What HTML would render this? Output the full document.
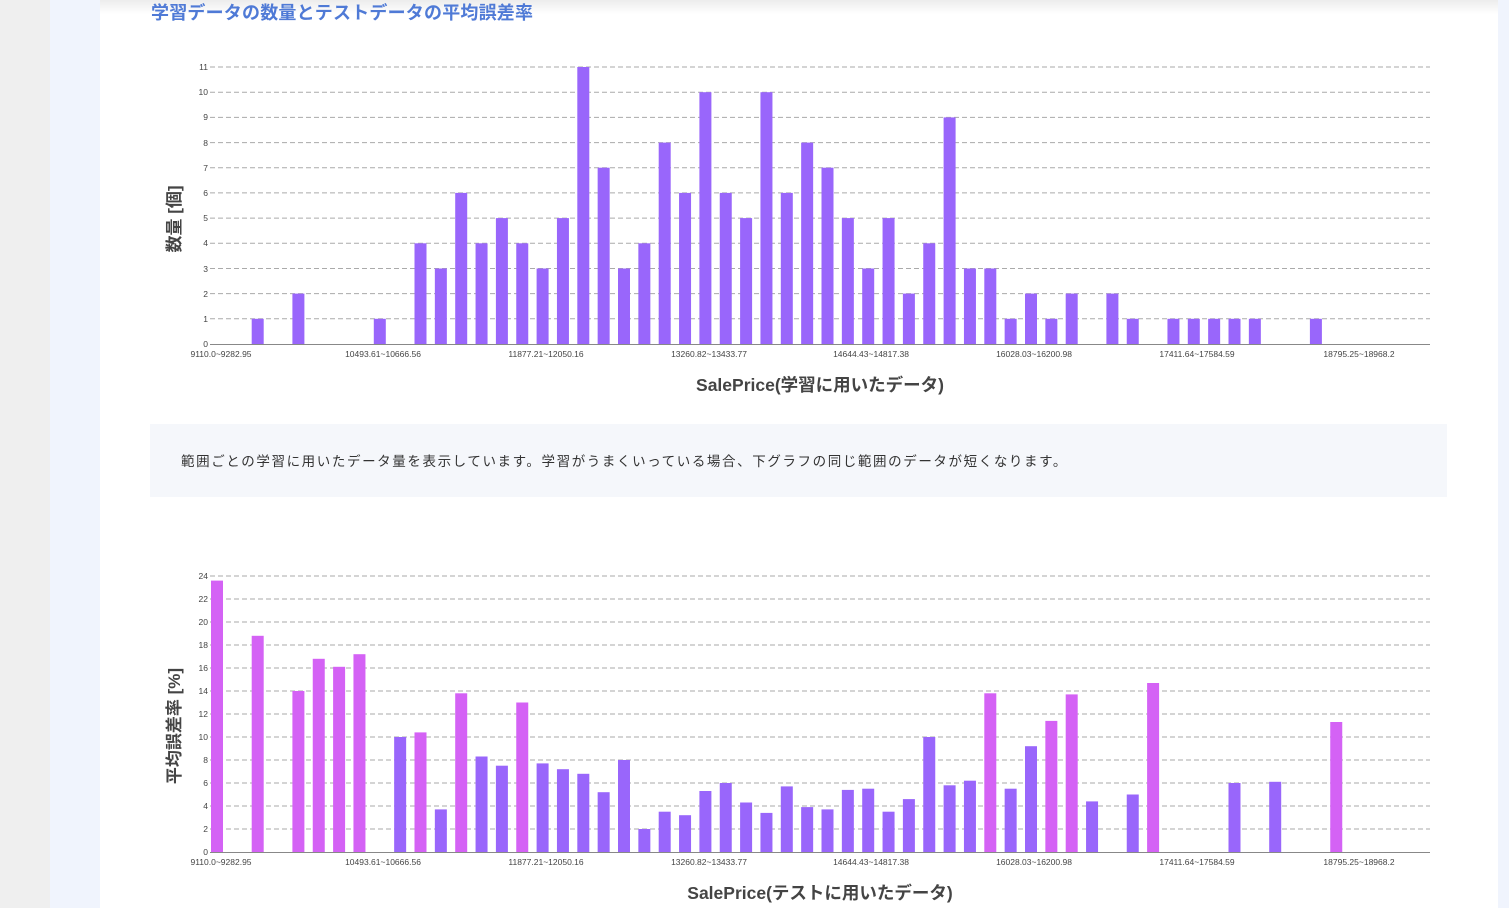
<!DOCTYPE html>
<html><head><meta charset="utf-8"><style>
body{margin:0;width:1509px;height:908px;overflow:hidden;background:#fff;font-family:"Liberation Sans","Noto Sans CJK JP",sans-serif;position:relative}
.l1{position:absolute;left:0;top:0;width:50px;height:908px;background:#efefef}
.l2{position:absolute;left:50px;top:0;width:50px;height:908px;background:#f0f4fd}
.r1{position:absolute;left:1498px;top:0;width:11px;height:908px;background:#f0f4fd}
.top{position:absolute;left:100px;top:0;width:1398px;height:14px;background:linear-gradient(#ececec,#fff)}
h1{position:absolute;left:151px;top:-1px;margin:0;font-size:18px;color:#4f7ad6;font-weight:bold;white-space:nowrap;letter-spacing:0.2px}
.info{position:absolute;left:150px;top:424px;width:1297px;height:73px;background:#f5f7fb}
.info p{margin:0;position:absolute;left:31px;top:26px;font-size:13.5px;color:#333;white-space:nowrap;letter-spacing:1.6px}
svg{position:absolute;left:0;top:0}
</style></head><body>
<div class="l1"></div><div class="l2"></div><div class="r1"></div><div class="top"></div>
<h1>学習データの数量とテストデータの平均誤差率</h1>
<div class="info"><p>範囲ごとの学習に用いたデータ量を表示しています。学習がうまくいっている場合、下グラフの同じ範囲のデータが短くなります。</p></div>
<svg width="1509" height="908" font-family="Liberation Sans, Noto Sans CJK JP, sans-serif">
<g stroke="#aaa" stroke-dasharray="5,3" stroke-width="1">
<line x1="210" x2="1430" y1="318.8" y2="318.8"/><line x1="210" x2="1430" y1="293.6" y2="293.6"/><line x1="210" x2="1430" y1="268.5" y2="268.5"/><line x1="210" x2="1430" y1="243.3" y2="243.3"/><line x1="210" x2="1430" y1="218.1" y2="218.1"/><line x1="210" x2="1430" y1="192.9" y2="192.9"/><line x1="210" x2="1430" y1="167.7" y2="167.7"/><line x1="210" x2="1430" y1="142.6" y2="142.6"/><line x1="210" x2="1430" y1="117.4" y2="117.4"/><line x1="210" x2="1430" y1="92.2" y2="92.2"/><line x1="210" x2="1430" y1="67" y2="67"/>
<line x1="210" x2="1430" y1="829" y2="829"/><line x1="210" x2="1430" y1="806" y2="806"/><line x1="210" x2="1430" y1="783" y2="783"/><line x1="210" x2="1430" y1="760" y2="760"/><line x1="210" x2="1430" y1="737" y2="737"/><line x1="210" x2="1430" y1="714" y2="714"/><line x1="210" x2="1430" y1="691" y2="691"/><line x1="210" x2="1430" y1="668" y2="668"/><line x1="210" x2="1430" y1="645" y2="645"/><line x1="210" x2="1430" y1="622" y2="622"/><line x1="210" x2="1430" y1="599" y2="599"/><line x1="210" x2="1430" y1="576" y2="576"/>
</g>
<line x1="210" x2="1430" y1="344.5" y2="344.5" stroke="#888"/>
<line x1="210" x2="1430" y1="852.5" y2="852.5" stroke="#888"/>
<g font-size="8.5" fill="#444" text-anchor="end">
<text x="208" y="347">0</text><text x="208" y="322">1</text><text x="208" y="297">2</text><text x="208" y="272">3</text><text x="208" y="246">4</text><text x="208" y="221">5</text><text x="208" y="196">6</text><text x="208" y="171">7</text><text x="208" y="146">8</text><text x="208" y="120">9</text><text x="208" y="95">10</text><text x="208" y="70">11</text>
<text x="208" y="855">0</text><text x="208" y="832">2</text><text x="208" y="809">4</text><text x="208" y="786">6</text><text x="208" y="763">8</text><text x="208" y="740">10</text><text x="208" y="717">12</text><text x="208" y="694">14</text><text x="208" y="671">16</text><text x="208" y="648">18</text><text x="208" y="625">20</text><text x="208" y="602">22</text><text x="208" y="579">24</text>
</g>
<g font-size="8.5" fill="#444" text-anchor="middle">
<text x="221" y="357">9110.0~9282.95</text><text x="383" y="357">10493.61~10666.56</text><text x="546" y="357">11877.21~12050.16</text><text x="709" y="357">13260.82~13433.77</text><text x="871" y="357">14644.43~14817.38</text><text x="1034" y="357">16028.03~16200.98</text><text x="1197" y="357">17411.64~17584.59</text><text x="1359" y="357">18795.25~18968.2</text>
<text x="221" y="865">9110.0~9282.95</text><text x="383" y="865">10493.61~10666.56</text><text x="546" y="865">11877.21~12050.16</text><text x="709" y="865">13260.82~13433.77</text><text x="871" y="865">14644.43~14817.38</text><text x="1034" y="865">16028.03~16200.98</text><text x="1197" y="865">17411.64~17584.59</text><text x="1359" y="865">18795.25~18968.2</text>
</g>
<g font-size="17.5" fill="#444" text-anchor="middle" font-weight="bold">
<text x="820" y="391">SalePrice(学習に用いたデータ)</text>
<text x="820" y="899">SalePrice(テストに用いたデータ)</text>
</g>
<g font-size="17" fill="#444" text-anchor="middle" font-weight="bold">
<text transform="translate(180,219) rotate(-90)">数量 [個]</text>
<text transform="translate(180,726) rotate(-90)">平均誤差率 [%]</text>
</g>
<g fill="#9966fb" transform="translate(211,344) scale(1,-1)">
<rect x="40.7" width="12" height="25.2"/><rect x="81.4" width="12" height="50.4"/><rect x="162.8" width="12" height="25.2"/>
<rect x="203.5" width="12" height="100.7"/><rect x="223.85" width="12" height="75.5"/><rect x="244.2" width="12" height="151.1"/><rect x="264.55" width="12" height="100.7"/><rect x="284.9" width="12" height="125.9"/><rect x="305.25" width="12" height="100.7"/><rect x="325.6" width="12" height="75.5"/><rect x="345.95" width="12" height="125.9"/><rect x="366.3" width="12" height="277"/><rect x="386.65" width="12" height="176.3"/><rect x="407" width="12" height="75.5"/><rect x="427.35" width="12" height="100.7"/><rect x="447.7" width="12" height="201.4"/><rect x="468.05" width="12" height="151.1"/><rect x="488.4" width="12" height="251.8"/><rect x="508.75" width="12" height="151.1"/><rect x="529.1" width="12" height="125.9"/><rect x="549.45" width="12" height="251.8"/><rect x="569.8" width="12" height="151.1"/><rect x="590.15" width="12" height="201.4"/><rect x="610.5" width="12" height="176.3"/><rect x="630.85" width="12" height="125.9"/><rect x="651.2" width="12" height="75.5"/><rect x="671.55" width="12" height="125.9"/><rect x="691.9" width="12" height="50.4"/><rect x="712.25" width="12" height="100.7"/><rect x="732.6" width="12" height="226.6"/><rect x="752.95" width="12" height="75.5"/><rect x="773.3" width="12" height="75.5"/><rect x="793.65" width="12" height="25.2"/><rect x="814" width="12" height="50.4"/><rect x="834.35" width="12" height="25.2"/><rect x="854.7" width="12" height="50.4"/><rect x="895.4" width="12" height="50.4"/><rect x="915.75" width="12" height="25.2"/><rect x="956.45" width="12" height="25.2"/><rect x="976.8" width="12" height="25.2"/><rect x="997.15" width="12" height="25.2"/><rect x="1017.5" width="12" height="25.2"/><rect x="1037.85" width="12" height="25.2"/><rect x="1098.9" width="12" height="25.2"/>
</g>
<g transform="translate(211,852) scale(1,-1)">
<g fill="#d462f5">
<rect x="0" width="12" height="271.4"/><rect x="40.7" width="12" height="216.2"/><rect x="81.4" width="12" height="161"/><rect x="101.75" width="12" height="193.2"/><rect x="122.1" width="12" height="185.2"/><rect x="142.45" width="12" height="197.8"/><rect x="203.5" width="12" height="119.6"/><rect x="244.2" width="12" height="158.7"/><rect x="305.25" width="12" height="149.5"/><rect x="773.3" width="12" height="158.7"/><rect x="834.35" width="12" height="131.1"/><rect x="854.7" width="12" height="157.6"/><rect x="936.1" width="12" height="169"/><rect x="1119.25" width="12" height="130"/>
</g>
<g fill="#9966fb">
<rect x="183.15" width="12" height="115"/><rect x="223.85" width="12" height="42.6"/><rect x="264.55" width="12" height="95.5"/><rect x="284.9" width="12" height="86.3"/><rect x="325.6" width="12" height="88.6"/><rect x="345.95" width="12" height="82.8"/><rect x="366.3" width="12" height="78.2"/><rect x="386.65" width="12" height="59.8"/><rect x="407" width="12" height="92"/><rect x="427.35" width="12" height="23"/><rect x="447.7" width="12" height="40.3"/><rect x="468.05" width="12" height="36.8"/><rect x="488.4" width="12" height="61"/><rect x="508.75" width="12" height="69"/><rect x="529.1" width="12" height="49.5"/><rect x="549.45" width="12" height="39.1"/><rect x="569.8" width="12" height="65.6"/><rect x="590.15" width="12" height="44.9"/><rect x="610.5" width="12" height="42.6"/><rect x="630.85" width="12" height="62.1"/><rect x="651.2" width="12" height="63.3"/><rect x="671.55" width="12" height="40.3"/><rect x="691.9" width="12" height="52.9"/><rect x="712.25" width="12" height="115"/><rect x="732.6" width="12" height="66.7"/><rect x="752.95" width="12" height="71.3"/><rect x="793.65" width="12" height="63.3"/><rect x="814" width="12" height="105.8"/><rect x="875.05" width="12" height="50.6"/><rect x="915.75" width="12" height="57.5"/><rect x="1017.5" width="12" height="69"/><rect x="1058.2" width="12" height="70.2"/>
</g>
</g>
</svg>
</body></html>
